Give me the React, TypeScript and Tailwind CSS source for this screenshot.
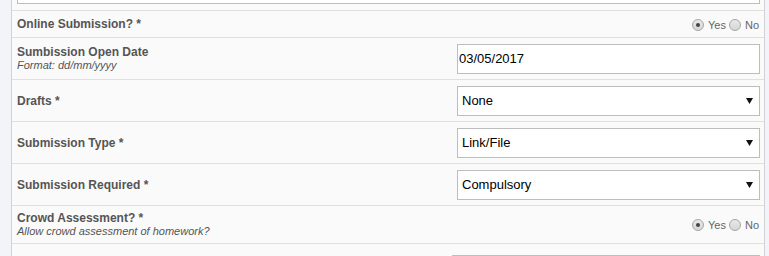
import React from "react";

const font = { fontFamily: '"Liberation Sans", Arial, sans-serif' };

function Radio({ checked }: { checked?: boolean }) {
  return (
    <span className="inline-flex h-[12px] w-[12px] items-center justify-center rounded-full border border-[#a6a6a6] bg-gradient-to-b from-[#e8e8e8] to-[#d6d6d6]">
      {checked && <span className="h-[4px] w-[4px] rounded-full bg-[#444]" />}
    </span>
  );
}

function YesNo() {
  return (
    <div className="flex items-center pt-[1px] text-[11px] text-[#666]">
      <Radio checked />
      <span className="ml-[4px] mr-[3px] pt-[1px]">Yes</span>
      <Radio />
      <span className="ml-[4px] pt-[1px]">No</span>
    </div>
  );
}

function Label({ title, hint }: { title: string; hint?: string }) {
  return (
    <div className="flex flex-col pt-[1px]">
      <span className="text-[12px] font-bold leading-[13px] text-[#555]">{title}</span>
      {hint && <span className="text-[11px] italic leading-[13px] text-[#555]">{hint}</span>}
    </div>
  );
}

function Select({ value }: { value: string }) {
  return (
    <div className="flex h-[30px] w-[303px] items-center justify-between border border-[#bdbdbd] bg-white pl-[4px] pr-[6px] text-[13px] text-black">
      <span className="pt-[1px]">{value}</span>
      <svg width="7" height="6" viewBox="0 0 7 6">
        <polygon points="0,0 7,0 3.5,6" fill="#111" />
      </svg>
    </div>
  );
}

export default function App() {
  return (
    <div className="flex h-[256px] w-[769px] overflow-hidden bg-[#f3f4fa]" style={font}>
      <div className="w-[11px]" />
      <div className="w-[754px] border-x border-[#d2d2d2] bg-[#fafafa]">
        <div className="h-[11px] border-b border-[#e0e0e0] pl-[5px] pr-[4px]">
          <div className="h-[4px] border-x border-b border-[#bdbdbd] bg-white" />
        </div>

        <div className="flex h-[27px] items-center justify-between border-b border-[#e0e0e0] pl-[5px] pr-[5px]">
          <Label title="Online Submission? *" />
          <YesNo />
        </div>

        <div className="flex h-[42px] items-center justify-between border-b border-[#e0e0e0] pl-[5px] pr-[4px]">
          <Label title="Sumbission Open Date" hint="Format: dd/mm/yyyy" />
          <div className="flex h-[30px] w-[303px] items-center border border-[#bdbdbd] bg-white pl-[1px] pt-[1px] text-[13px] text-black">
            03/05/2017
          </div>
        </div>

        <div className="flex h-[42px] items-center justify-between border-b border-[#e0e0e0] pl-[5px] pr-[4px]">
          <Label title="Drafts *" />
          <Select value="None" />
        </div>

        <div className="flex h-[42px] items-center justify-between border-b border-[#e0e0e0] pl-[5px] pr-[4px]">
          <Label title="Submission Type *" />
          <Select value="Link/File" />
        </div>

        <div className="flex h-[42px] items-center justify-between border-b border-[#e0e0e0] pl-[5px] pr-[4px]">
          <Label title="Submission Required *" />
          <Select value="Compulsory" />
        </div>

        <div className="flex h-[38px] items-center justify-between border-b border-[#e0e0e0] pl-[5px] pr-[5px]">
          <Label title="Crowd Assessment? *" hint="Allow crowd assessment of homework?" />
          <YesNo />
        </div>

        <div className="flex justify-end pl-[5px] pr-[4px] pt-[11px]">
          <div className="h-[30px] w-[308px] border border-[#bdbdbd] bg-white" />
        </div>
      </div>
    </div>
  );
}
